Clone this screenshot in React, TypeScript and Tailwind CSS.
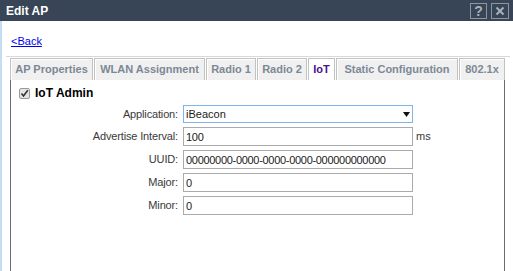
import { useState } from 'react';

const tabs = [
    { label: 'AP Properties', w: 'w-[83px]' },
    { label: 'WLAN Assignment', w: 'w-[111px]' },
    { label: 'Radio 1', w: 'w-[50px]' },
    { label: 'Radio 2', w: 'w-[50px]' },
    { label: 'IoT', w: 'w-[27px]' },
    { label: 'Static Configuration', w: 'w-[122px]' },
    { label: '802.1x', w: 'w-[46px]' },
];

function FieldRow({ label, children }: { label: string; children: React.ReactNode }) {
    return (
        <div className="flex items-center">
            <label className="w-[172px] text-right text-[11px] tracking-[-0.15px] text-[#3a3a3a] pr-[5px]">{label}</label>
            {children}
        </div>
    );
}

function TextInput({ value }: { value: string }) {
    return (
        <input
            type="text"
            defaultValue={value}
            className="w-[230px] h-[19px] border border-[#ababab] px-[2px] text-[11px] tracking-[-0.3px] text-[#1a1a1a] outline-none"
        />
    );
}

export default function App() {
    const [active, setActive] = useState('IoT');

    return (
        <div className="w-[513px] h-[271px] bg-white flex flex-col overflow-hidden font-['Liberation_Sans',Arial,sans-serif]">
            {/* title bar */}
            <div className="h-[21px] bg-[#384556] flex items-center pl-[6px] pr-[4px]">
                <span className="text-white font-bold text-[12px]">Edit AP</span>
                <div className="ml-auto flex gap-[4px]">
                    <button type="button" className="w-[17px] h-[16px] border border-[#8c96a3] flex items-center justify-center text-[#a9b1ba] font-bold text-[14px] leading-none">
                        ?
                    </button>
                    <button type="button" className="w-[18px] h-[16px] border border-[#8c96a3] flex items-center justify-center">
                        <svg width="10" height="10" viewBox="0 0 10 10">
                            <path d="M1.5 1.5 L8.5 8.5 M8.5 1.5 L1.5 8.5" stroke="#a9b1ba" strokeWidth="2" />
                        </svg>
                    </button>
                </div>
            </div>

            <div className="flex-1 flex">
                <div className="w-[2px] bg-[#c6dcf2]" />
                <div className="flex-1 flex flex-col">
                    <div className="pt-[14px] pl-[9px] text-[11px] leading-[13px]">
                        <a href="#" className="text-[#0000ee] underline">&lt;Back</a>
                    </div>
                    <div className="mt-[8px] ml-[4px] mr-[3px] h-px bg-[#d8d8d8]" />

                    {/* tabs */}
                    <div className="mt-[1px] pl-[8px] flex gap-[1px]">
                        {tabs.map((t) => {
                            const on = t.label === active;
                            return (
                                <button
                                    type="button"
                                    key={t.label}
                                    onClick={() => setActive(t.label)}
                                    className={`${t.w} h-[22px] border-t border-x border-[#c2c2c2] shadow-[inset_1px_1px_0_#ffffff] text-[11px] font-bold whitespace-nowrap flex items-center justify-center ${
                                        on ? 'bg-white text-[#4b128f]' : 'bg-[#f0f0f0] text-[#7d8896]'
                                    }`}
                                >
                                    {t.label}
                                </button>
                            );
                        })}
                    </div>

                    {/* panel */}
                    <div className="ml-[8px] w-[495px] flex-1 border-x border-[#6b6b6b] pl-[8px]">
                        <div className="pt-[6px] h-[20px] flex items-center gap-[5px]">
                            <span className="w-[11px] h-[11px] border border-[#9a9a9a] rounded-[2px] bg-[#e4e4e4] flex items-center justify-center">
                                <svg width="9" height="9" viewBox="0 0 9 9">
                                    <path d="M1.5 4.5 L3.5 7 L7.8 1.2" stroke="#333" strokeWidth="1.6" fill="none" />
                                </svg>
                            </span>
                            <span className="text-[12px] font-bold text-black">IoT Admin</span>
                        </div>

                        <div className="mt-[5px] -ml-[8px] flex flex-col gap-[4px]">
                            <FieldRow label="Application:">
                                <div className="relative flex">
                                    <select className="appearance-none w-[230px] h-[18px] border border-[#7eb4ea] px-[2px] text-[11px] text-[#1a1a1a] bg-white outline-none">
                                        <option>iBeacon</option>
                                    </select>
                                    <svg className="absolute left-[220px] top-[7px]" width="7" height="5" viewBox="0 0 7 5">
                                        <path d="M0 0 H7 L3.5 5 Z" fill="#111" />
                                    </svg>
                                </div>
                            </FieldRow>
                            <FieldRow label="Advertise Interval:">
                                <TextInput value="100" />
                                <span className="ml-[3px] text-[11px] text-[#3a3a3a]">ms</span>
                            </FieldRow>
                            <FieldRow label="UUID:">
                                <TextInput value="00000000-0000-0000-0000-000000000000" />
                            </FieldRow>
                            <FieldRow label="Major:">
                                <TextInput value="0" />
                            </FieldRow>
                            <FieldRow label="Minor:">
                                <TextInput value="0" />
                            </FieldRow>
                        </div>
                    </div>
                </div>
            </div>
        </div>
    );
}
